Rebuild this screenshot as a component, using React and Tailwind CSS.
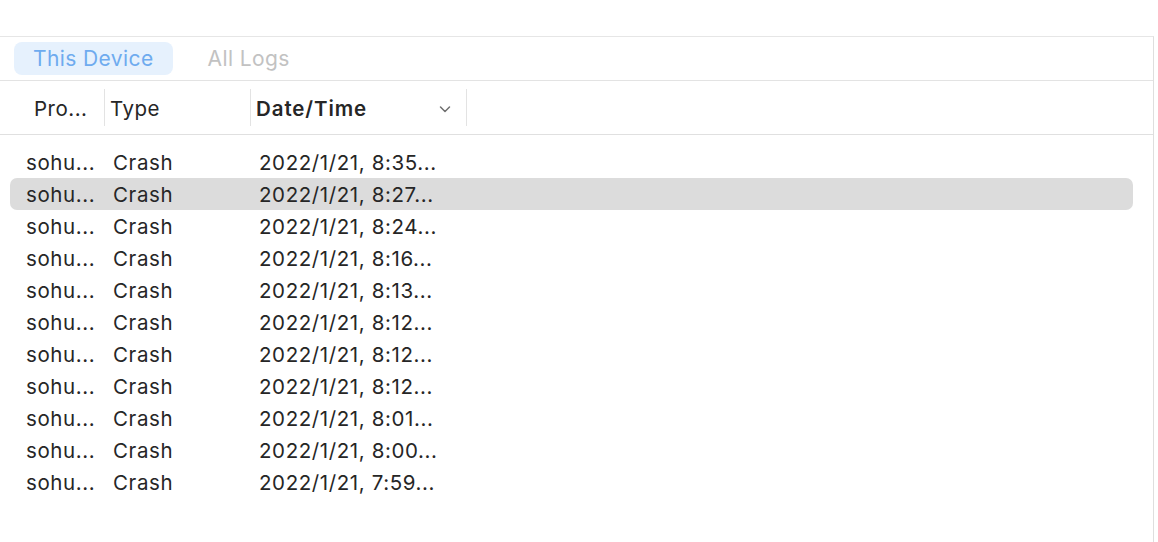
import React from "react";

const rows = [
  "8:35...",
  "8:27...",
  "8:24...",
  "8:16...",
  "8:13...",
  "8:12...",
  "8:12...",
  "8:12...",
  "8:01...",
  "8:00...",
  "7:59...",
];

const ChevronDown = () => (
  <svg width="14" height="14" viewBox="0 0 14 14" fill="none">
    <path d="M2.5 5l4.5 4.5L11.5 5" stroke="#6f6f6f" strokeWidth="1.5" strokeLinecap="round" strokeLinejoin="round" />
  </svg>
);

export default function App() {
  return (
    <div
      className="w-[1158px] h-[542px] bg-white overflow-hidden flex flex-col"
      style={{ fontFamily: "Inter, 'Open Sans', sans-serif" }}
    >
      <div className="h-[36px] shrink-0" />
      <div className="flex-1 flex flex-col border-t border-[#e6e6e6] border-r border-r-[#dedede] mr-[4px]">
        {/* tabs */}
        <div className="h-[44px] shrink-0 flex items-center pl-[14px] gap-[35px] border-b border-[#e3e3e3] tracking-[0.4px]">
          <div className="h-[33px] px-[19px] rounded-[8px] bg-[#e6f1fd] flex items-center text-[21px] text-[#6eabef]">
            This Device
          </div>
          <div className="text-[21px] text-[#c2c2c2]">All Logs</div>
        </div>

        {/* header */}
        <div className="h-[54px] shrink-0 flex items-center border-b border-[#e0e0e0] text-[20.5px] text-[#262626] tracking-[0.5px]">
          <div className="w-[105px] pl-[34px] pt-[3px] h-[37px] flex items-center border-r border-[#e3e3e3]">Pro...</div>
          <div className="w-[146px] pl-[5px] pt-[3px] h-[37px] flex items-center border-r border-[#e3e3e3]">Type</div>
          <div className="w-[216px] pl-[5px] pr-[14px] pt-[3px] h-[37px] flex items-center justify-between border-r border-[#e3e3e3] font-semibold tracking-[0.9px]">
            <span>Date/Time</span>
            <ChevronDown />
          </div>
        </div>

        {/* rows */}
        <div className="flex flex-col pt-[11px] px-[10px] text-[20.5px] text-[#262626] tracking-[0.6px]">
          {rows.map((t, i) => (
            <div
              key={i}
              className={`h-[32px] pt-[2px] flex items-center rounded-[7px] mr-[10px] ${i === 1 ? "bg-[#dcdcdc]" : ""}`}
            >
              <div className="w-[87px] pl-[16px]">sohu...</div>
              <div className="w-[146px] pl-[16px]">Crash</div>
              <div className="pl-[16px]">2022/1/21, {t}</div>
            </div>
          ))}
        </div>
      </div>
    </div>
  );
}
